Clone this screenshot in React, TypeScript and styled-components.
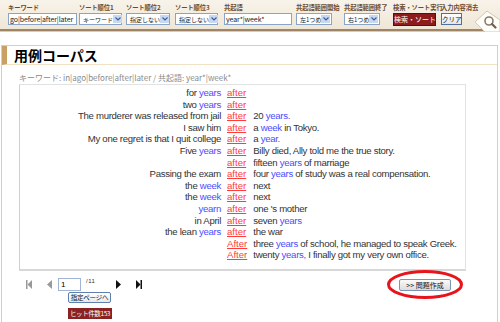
import React from "react";
import styled, { createGlobalStyle } from "styled-components";

const Global = createGlobalStyle`
  html, body { margin: 0; padding: 0; background: #fff; }
  body { font-family: "Liberation Sans", "Noto Sans CJK JP", sans-serif; width: 500px; height: 322px; overflow: hidden; }
`;

const JP = `"Noto Sans CJK JP", "Liberation Sans", sans-serif`;

const Header = styled.div`
  height: 31px;
  background: linear-gradient(#f8f3ea, #efe6d6);
  border-bottom: 2px solid #a08466;
  box-shadow: 0 1px 0 #d9cbb6;
  display: flex;
  align-items: flex-start;
  padding: 4px 0 0 8px;
  box-sizing: border-box;
  position: relative;
`;

const Field = styled.div<{ $w: number; $ml?: number }>`
  display: flex;
  flex-direction: column;
  width: ${(p) => p.$w}px;
  margin-left: ${(p) => p.$ml ?? 0}px;
`;

const Label = styled.div`
  font-family: ${JP};
  font-size: 6.3px;
  font-weight: bold;
  color: #6b4a2e;
  line-height: 8px;
  height: 8px;
  white-space: nowrap;
  letter-spacing: -0.1px;
`;

const TextBox = styled.div`
  margin-top: 1px;
  height: 10px;
  border: 1px solid #8aa4c8;
  background: #fff;
  font-size: 7px;
  line-height: 10px;
  color: #222;
  padding-left: 1px;
  overflow: hidden;
  white-space: nowrap;
  font-family: ${JP};
  letter-spacing: -0.1px;
`;

const Select = styled.div`
  margin-top: 1px;
  height: 10px;
  border: 1px solid #8aa4c8;
  background: #fff;
  display: flex;
  align-items: center;
  justify-content: space-between;
  font-family: ${JP};
  font-size: 6px;
  white-space: nowrap;
  color: #222;
  padding-left: 3px;
`;

const Arrow = styled.span`
  width: 9px;
  height: 8px;
  margin-right: 1px;
  flex: none;
  background: #c8d8f0;
  display: flex;
  align-items: center;
  justify-content: center;
`;

const RedBtn = styled.div`
  margin-top: 1px;
  height: 11px;
  width: 41px;
  background: #8c1c1c;
  border: 1px solid #5a0e0e;
  color: #fff;
  font-family: ${JP};
  font-size: 7px;
  line-height: 11px;
  text-align: center;
  white-space: nowrap;
`;

const ClearBtn = styled.div`
  margin-top: 1px;
  height: 10px;
  width: 19px;
  border: 1px solid #4f6f9f;
  background: linear-gradient(#fff, #e6e6e6);
  font-family: ${JP};
  font-size: 6.5px;
  line-height: 10px;
  text-align: center;
  color: #111;
  white-space: nowrap;
`;

const Glass = styled.div`
  position: absolute;
  right: 0;
  top: 8px;
`;

const Page = styled.div`
  margin: 14px 2px 0 1px;
  border: 1px solid #cfcfcf;
  border-bottom: none;
  height: 280px;
`;

const Title = styled.h1`
  margin: 0;
  height: 18px;
  border-left: 5px solid #c9a063;
  border-bottom: 1px solid #f1e2c6;
  padding-left: 7px;
  font-family: ${JP};
  font-size: 14px;
  font-weight: bold;
  line-height: 18px;
  color: #000;
`;

const KeyLine = styled.div`
  margin: 8px 0 0 17px;
  font-family: ${JP};
  font-size: 8px;
  color: #8a8a8a;
  line-height: 9px;
`;

const Results = styled.div`
  margin: 2px 0 0 17px;
  width: 445px;
  border: 1px solid #e2e2e2;
  border-left-color: #d0d0d0;
  border-bottom: 2px solid #d8d8d8;
  padding: 2px 0 8px;
  display: grid;
  grid-template-columns: 201px auto 1fr;
  column-gap: 6px;
  font-size: 9.6px;
  line-height: 11.6px;
  color: #333;
  letter-spacing: -0.3px;
`;

const Left = styled.div`
  text-align: right;
  white-space: nowrap;
`;

const Key = styled.a`
  color: #ff3b3b;
  text-decoration: underline;
  letter-spacing: 0;
`;

const Right = styled.div`
  white-space: nowrap;
`;

const Hl = styled.span`
  color: #4c4cff;
`;

const Bottom = styled.div`
  display: flex;
  justify-content: space-between;
  padding: 7px 0 0 24px;
`;

const Pager = styled.div`
  display: flex;
  flex-direction: column;
`;

const PagerRow = styled.div`
  display: flex;
  align-items: center;
  height: 13px;
`;

const PageInput = styled.div`
  width: 19px;
  height: 11px;
  border: 1px solid #9fb4d6;
  font-size: 8px;
  line-height: 11px;
  padding-left: 2px;
  box-sizing: content-box;
  margin-left: 6px;
`;

const Total = styled.span`
  font-size: 6px;
  color: #333;
  align-self: flex-start;
  margin: 0 13px 0 5px;
  letter-spacing: 0.5px;
`;

const Icon = styled.svg<{ $ml?: number }>`
  margin-left: ${(p) => p.$ml ?? 0}px;
  display: block;
`;

const GoBtn = styled.div`
  margin: 1px 0 0 42px;
  width: 41px;
  height: 9px;
  border: 1px solid #5f7fae;
  border-radius: 2px;
  background: linear-gradient(#fff, #e9e9e9);
  font-family: ${JP};
  font-size: 6.5px;
  line-height: 9px;
  text-align: center;
  color: #111;
  white-space: nowrap;
  letter-spacing: -0.2px;
`;

const Hits = styled.div`
  margin: 5px 0 0 42px;
  width: 44px;
  height: 11px;
  background: #8a2222;
  color: #fff;
  font-family: ${JP};
  font-size: 6.5px;
  line-height: 11px;
  text-align: center;
  letter-spacing: -0.4px;
  white-space: nowrap;
`;

const MakeWrap = styled.div`
  position: relative;
  margin: 1px 46px 0 0;
  height: 14px;
`;

const MakeBtn = styled.div`
  width: 50px;
  height: 10px;
  border: 1px solid #7f93b3;
  border-radius: 2px;
  background: linear-gradient(#fafafa, #dcdcdc);
  font-family: ${JP};
  font-size: 7px;
  line-height: 10px;
  text-align: center;
  color: #111;
  white-space: nowrap;
`;

const Ellipse = styled.svg`
  position: absolute;
  left: -13px;
  top: -10px;
`;

function parse(s: string) {
  const parts = s.split(/(\[[^\]]+\])/);
  return parts.map((p, i) =>
    p.startsWith("[") ? <Hl key={i}>{p.slice(1, -1)}</Hl> : <React.Fragment key={i}>{p}</React.Fragment>
  );
}

const rows: [string, string, string][] = [
  ["for [years]", "after", ""],
  ["two [years]", "after", ""],
  ["The murderer was released from jail", "after", "20 [years.]"],
  ["I saw him", "after", "a [week] in Tokyo."],
  ["My one regret is that I quit college", "after", "a [year.]"],
  ["Five [years]", "after", "Billy died, Ally told me the true story."],
  ["", "after", "fifteen [years] of marriage"],
  ["Passing the exam", "after", "four [years] of study was a real compensation."],
  ["the [week]", "after", "next"],
  ["the [week]", "after", "next"],
  ["[yearn]", "after", "one 's mother"],
  ["in April", "after", "seven [years]"],
  ["the lean [years]", "after", "the war"],
  ["", "After", "three [years] of school, he managed to speak Greek."],
  ["", "After", "twenty [years,] I finally got my very own office."],
];

const SelArrow = () => (
  <Arrow>
    <svg width="6" height="4" viewBox="0 0 6 4">
      <path d="M0.5 0.5 L3 3 L5.5 0.5" stroke="#3a5f9a" strokeWidth="1.2" fill="none" />
    </svg>
  </Arrow>
);

export default function App() {
  return (
    <>
      <Global />
      <Header>
        <Field $w={69}>
          <Label>キーワード</Label>
          <TextBox>go|before|after|later</TextBox>
        </Field>
        <Field $w={43} $ml={2}>
          <Label>ソート順位1</Label>
          <Select>キーワード<SelArrow /></Select>
        </Field>
        <Field $w={44} $ml={4}>
          <Label>ソート順位2</Label>
          <Select>指定しない<SelArrow /></Select>
        </Field>
        <Field $w={43} $ml={5}>
          <Label>ソート順位3</Label>
          <Select>指定しない<SelArrow /></Select>
        </Field>
        <Field $w={68} $ml={6}>
          <Label>共起語</Label>
          <TextBox>year*|week*</TextBox>
        </Field>
        <Field $w={36} $ml={4}>
          <Label>共起語範囲開始</Label>
          <Select>左1つめ<SelArrow /></Select>
        </Field>
        <Field $w={36} $ml={12}>
          <Label>共起語範囲終了</Label>
          <Select>右1つめ<SelArrow /></Select>
        </Field>
        <Field $w={43} $ml={13}>
          <Label>検索・ソート実行</Label>
          <RedBtn>検索・ソート</RedBtn>
        </Field>
        <Field $w={40} $ml={5}>
          <Label>入力内容消去</Label>
          <ClearBtn>クリア</ClearBtn>
        </Field>
        <Glass>
          <svg width="27" height="24" viewBox="0 0 27 24">
            <path d="M2 14 L14 3 L27 12 L27 24 L12 24 Z" fill="#fffdf7" stroke="#d6c7ae" strokeWidth="1" />
            <circle cx="16" cy="13" r="4" fill="#fff" stroke="#8a7a66" strokeWidth="1.6" />
            <path d="M19 16 L22.5 19.5" stroke="#6e6050" strokeWidth="2.2" strokeLinecap="round" />
          </svg>
        </Glass>
      </Header>
      <Page>
        <Title>用例コーパス</Title>
        <KeyLine>キーワード: in|ago|before|after|later / 共起語: year*|week*</KeyLine>
        <Results>
          {rows.map(([l, k, r], i) => (
            <React.Fragment key={i}>
              <Left>{parse(l)}</Left>
              <Key href="#">{k}</Key>
              <Right>{parse(r)}</Right>
            </React.Fragment>
          ))}
        </Results>
        <Bottom>
          <Pager>
            <PagerRow>
              <Icon width="6" height="9" viewBox="0 0 6 9">
                <rect x="0" y="0" width="1.5" height="9" fill="#999" />
                <path d="M6 0 L1.5 4.5 L6 9 Z" fill="#999" />
              </Icon>
              <Icon width="5" height="9" viewBox="0 0 5 9" $ml={15}>
                <path d="M5 0 L0 4.5 L5 9 Z" fill="#999" />
              </Icon>
              <PageInput>1</PageInput>
              <Total>/11</Total>
              <Icon width="5" height="9" viewBox="0 0 5 9" $ml={8}>
                <path d="M0 0 L5 4.5 L0 9 Z" fill="#111" />
              </Icon>
              <Icon width="6" height="9" viewBox="0 0 6 9" $ml={15}>
                <path d="M0 0 L4.5 4.5 L0 9 Z" fill="#111" />
                <rect x="4.5" y="0" width="1.5" height="9" fill="#111" />
              </Icon>
            </PagerRow>
            <GoBtn>指定ページへ</GoBtn>
            <Hits>ヒット件数153</Hits>
          </Pager>
          <MakeWrap>
            <MakeBtn>&gt;&gt; 問題作成</MakeBtn>
            <Ellipse width="78" height="31" viewBox="0 0 78 31">
              <ellipse cx="39" cy="15.5" rx="36.5" ry="13" fill="none" stroke="#e8141c" strokeWidth="3" />
            </Ellipse>
          </MakeWrap>
        </Bottom>
      </Page>
    </>
  );
}
